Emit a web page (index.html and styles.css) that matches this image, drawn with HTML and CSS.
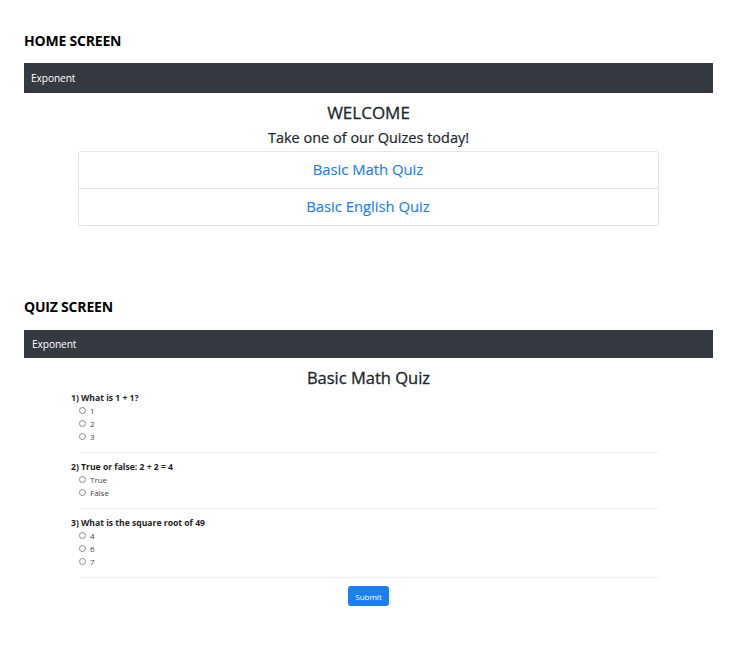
FILE: index.html
```html
<!DOCTYPE html>
<html>
<head>
<meta charset="utf-8">
<link rel="stylesheet" href="styles.css">
</head>
<body>
<div class="page">
  <h2 class="screen-title first">HOME SCREEN</h2>
  <nav class="navbar"><span class="brand">Exponent</span></nav>
  <h1 class="welcome">WELCOME</h1>
  <p class="tagline">Take one of our Quizes today!</p>
  <ul class="list-group">
    <li class="list-item"><a href="#">Basic Math Quiz</a></li>
    <li class="list-item"><a href="#">Basic English Quiz</a></li>
  </ul>

  <h2 class="screen-title second">QUIZ SCREEN</h2>
  <nav class="navbar navbar-quiz"><span class="brand">Exponent</span></nav>
  <h1 class="quiz-title">Basic Math Quiz</h1>
  <form class="quiz">
    <div class="question">
      <div class="q-text">1) What is 1 + 1?</div>
      <label class="option"><span class="radio"></span>1</label>
      <label class="option"><span class="radio"></span>2</label>
      <label class="option"><span class="radio"></span>3</label>
    </div>
    <hr class="divider">
    <div class="question">
      <div class="q-text">2) True or false: 2 + 2 = 4</div>
      <label class="option"><span class="radio"></span>True</label>
      <label class="option"><span class="radio"></span>False</label>
    </div>
    <hr class="divider">
    <div class="question">
      <div class="q-text">3) What is the square root of 49</div>
      <label class="option"><span class="radio"></span>4</label>
      <label class="option"><span class="radio"></span>6</label>
      <label class="option"><span class="radio"></span>7</label>
    </div>
    <hr class="divider">
    <div class="submit-row"><button type="button" class="btn">Submit</button></div>
  </form>
</div>
</body>
</html>
```
FILE: styles.css
```css
* { box-sizing: border-box; }
html, body { margin: 0; padding: 0; background: #fff; }
body {
  font-family: "Open Sans", "Noto Sans", sans-serif;
  color: #212529;
}
.page {
  width: 689px;
  margin-left: 24px;
}
.screen-title {
  font-size: 14px;
  font-weight: 700;
  line-height: 20px;
  margin: 0;
  color: #000;
  letter-spacing: -0.2px;
}
.screen-title.first { padding-top: 31px; margin-bottom: 12px; }
.screen-title.second { margin-top: 71px; margin-bottom: 13px; }
.navbar {
  height: 30px;
  background: #343a40;
  display: flex;
  align-items: center;
  padding-left: 7px;
}
.navbar-quiz { height: 28px; padding-left: 8px; }
.brand {
  color: #fff;
  font-size: 10.2px;
  letter-spacing: -0.1px;
}
.welcome {
  margin: 8px 0 0;
  font-size: 17px;
  font-weight: 400;
  line-height: 24px;
  text-align: center;
  -webkit-text-stroke: 0.3px #212529;
}
.tagline {
  margin: 1px 0 1px;
  font-size: 14.5px;
  line-height: 24px;
  text-align: center;
  -webkit-text-stroke: 0.2px #212529;
}
.list-group {
  list-style: none;
  margin: 0 auto;
  padding: 0;
  width: 581px;
  border: 1px solid #e3e3e3;
  border-radius: 3px;
  position: relative;
  left: -0.5px;
}
.list-item {
  height: 36px;
  display: flex;
  align-items: center;
  justify-content: center;
  padding-bottom: 3px;
}
.list-item + .list-item { border-top: 1px solid #e3e3e3; height: 37px; }
.list-item a {
  color: #1a7ff0;
  text-decoration: none;
  font-size: 14.8px;
  -webkit-text-stroke: 0.15px #1a7ff0;
}
.quiz-title {
  margin: 8px 0 2px;
  font-size: 16.5px;
  font-weight: 400;
  line-height: 24px;
  text-align: center;
  -webkit-text-stroke: 0.3px #212529;
}
.quiz {
  margin: 0;
  padding-left: 47px;
  width: 634px;
}
.q-text {
  font-size: 8.6px;
  font-weight: 700;
  line-height: 12px;
  color: #1e1e1e;
}
.option {
  display: flex;
  align-items: center;
  height: 13px;
  padding-left: 8px;
  font-size: 8px;
  color: #444;
}
.radio {
  width: 7px;
  height: 7px;
  border: 1px solid #8a8a8a;
  border-radius: 50%;
  margin-right: 4px;
}
.divider {
  margin: 9px 0 8px 9px;
  border: 0;
  border-top: 1px solid #ececec;
  height: 0;
}
.submit-row {
  display: flex;
  justify-content: center;
  padding-left: 8px;
}
.btn {
  width: 41px;
  height: 20px;
  background: #1a7ff0;
  color: #fff;
  border: 0;
  border-radius: 3px;
  font-family: "Open Sans", sans-serif;
  font-size: 8px;
  padding: 0;
}
```
